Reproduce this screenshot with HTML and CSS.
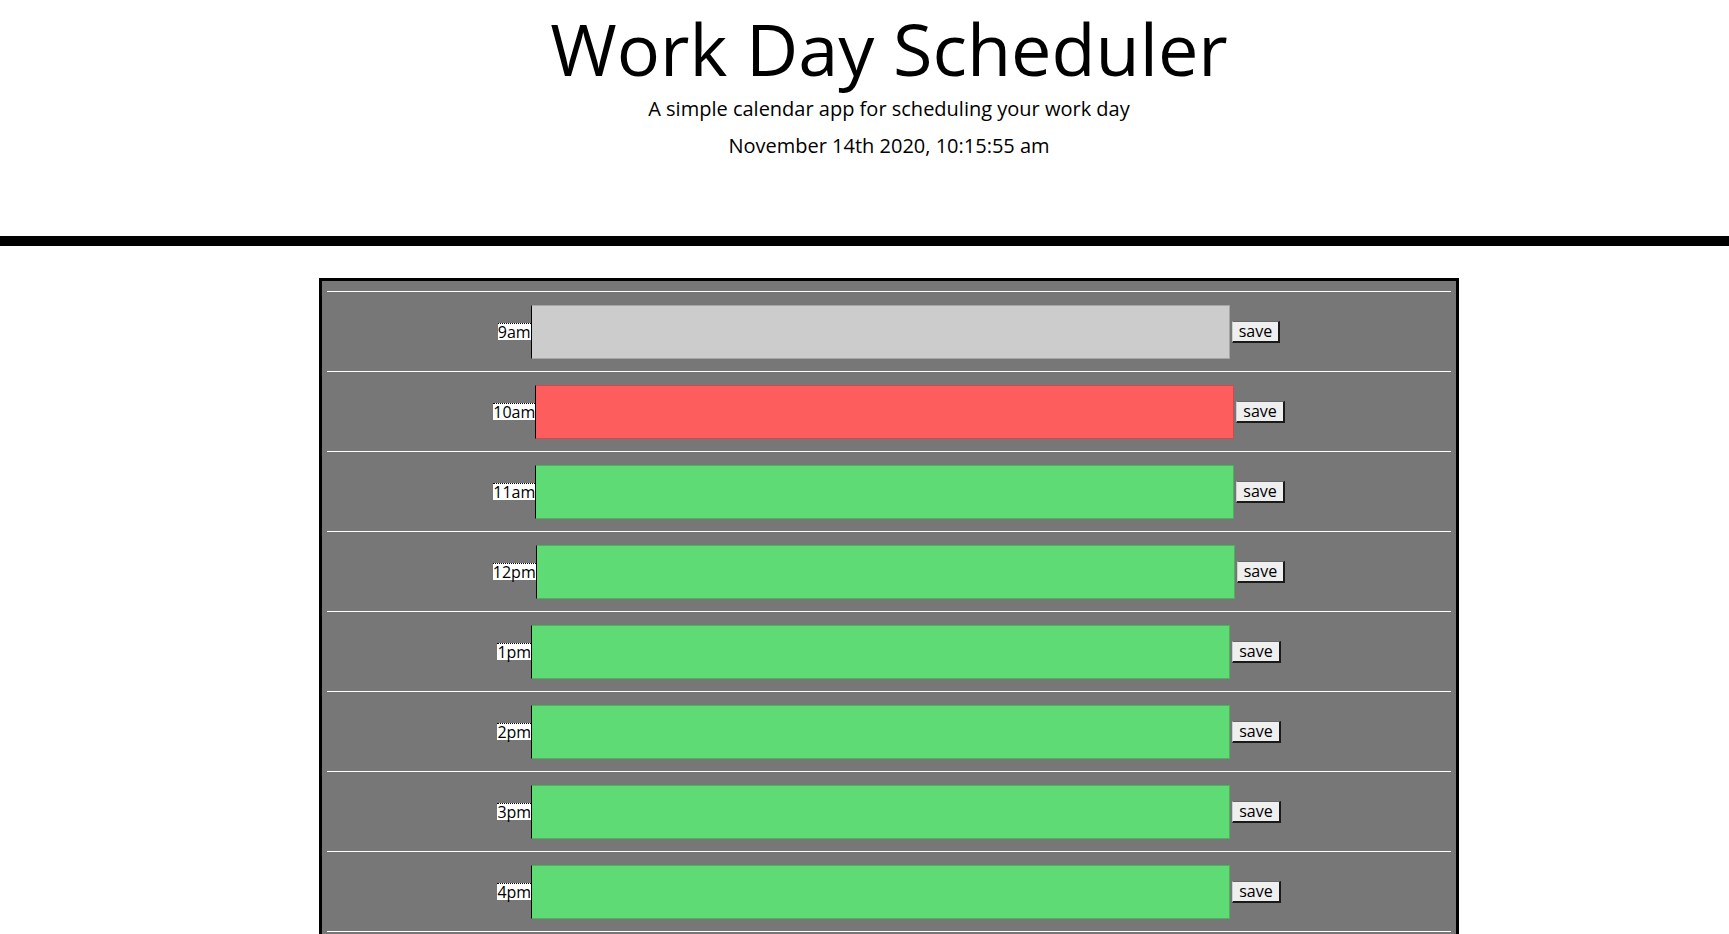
FILE: index.html
```html
<!DOCTYPE html>
<html lang="en">
<head>
<meta charset="utf-8">
<title>Work Day Scheduler</title>
<link rel="stylesheet" href="styles.css">
</head>
<body>
<header class="jumbotron">
  <div class="shift">
    <h1 class="title">Work Day Scheduler</h1>
    <p class="lead">A simple calendar app for scheduling your work day</p>
    <p class="current-day">November 14th 2020, 10:15:55 am</p>
  </div>
</header>
<main class="shift">
  <div class="container">
    <div class="time-block"><span class="hour">9am</span><textarea class="description past"></textarea><button class="save-btn">save</button></div>
    <div class="time-block"><span class="hour">10am</span><textarea class="description present"></textarea><button class="save-btn">save</button></div>
    <div class="time-block"><span class="hour">11am</span><textarea class="description future"></textarea><button class="save-btn">save</button></div>
    <div class="time-block"><span class="hour">12pm</span><textarea class="description future"></textarea><button class="save-btn">save</button></div>
    <div class="time-block"><span class="hour">1pm</span><textarea class="description future"></textarea><button class="save-btn">save</button></div>
    <div class="time-block"><span class="hour">2pm</span><textarea class="description future"></textarea><button class="save-btn">save</button></div>
    <div class="time-block"><span class="hour">3pm</span><textarea class="description future"></textarea><button class="save-btn">save</button></div>
    <div class="time-block"><span class="hour">4pm</span><textarea class="description future"></textarea><button class="save-btn">save</button></div>
    <div class="time-block"><span class="hour">5pm</span><textarea class="description future"></textarea><button class="save-btn">save</button></div>
  </div>
</main>
</body>
</html>
```
FILE: styles.css
```css
html, body {
  margin: 0;
  padding: 0;
  background: #fff;
  color: #000;
  font-family: "Open Sans", "Noto Sans", sans-serif;
}

.shift {
  margin-left: 49px;
}

.jumbotron {
  padding: 2px 0 75px;
  border-bottom: 10px solid #000;
  text-align: center;
}

.title {
  margin: 0;
  font-size: 72px;
  font-weight: 400;
  line-height: 92px;
}

.lead {
  margin: 0;
  font-size: 20px;
  line-height: 30px;
}

.current-day {
  margin: 7px 0 0;
  font-size: 20px;
  line-height: 30px;
}

main {
  padding-top: 32px;
}

.container {
  box-sizing: border-box;
  width: 1140px;
  margin: 0 auto;
  border: 3px solid #000;
  background: #777;
  padding: 10px 5px 0;
}

.time-block {
  height: 79px;
  border-top: 1px solid #fff;
  display: flex;
  align-items: center;
  justify-content: center;
}

.hour {
  display: inline-block;
  background: #fff;
  border-top: 1px dotted #000;
  font-size: 16px;
  line-height: 16px;
  color: #000;
}

.description {
  box-sizing: border-box;
  width: 699px;
  height: 54px;
  margin: 0;
  padding: 2px;
  resize: none;
  border: 1px solid rgba(0, 0, 0, 0.18);
  border-left: 1px solid #000;
  font-family: "Open Sans", sans-serif;
}

.past { background: #cccccc; }
.present { background: #fe5d5d; }
.future { background: #5edb74; }

.save-btn {
  margin: 0 0 0 2px;
  padding: 0 6px;
  height: 22px;
  background: #efefef;
  border-style: solid;
  border-width: 1px 2px 2px 1px;
  border-color: #666 #1a1a1a #1a1a1a #cfcfcf;
  font-family: "Open Sans", sans-serif;
  font-size: 16px;
  line-height: 18px;
  color: #000;
}
```
